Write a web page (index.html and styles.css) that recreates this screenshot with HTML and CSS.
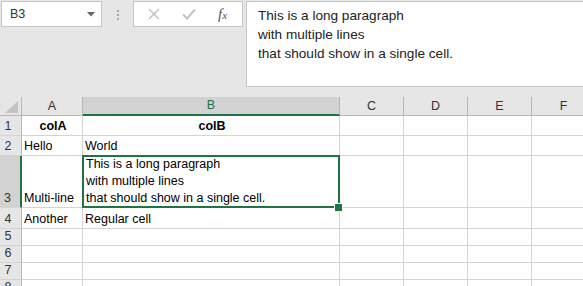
FILE: index.html
```html
<!DOCTYPE html>
<html lang="en">
<head>
  <meta charset="UTF-8" />
  <title>Sheet</title>
  <link rel="stylesheet" href="styles.css">
</head>
<body>
  <div class="toolbar">
    <div class="namebox">
      <span>B3</span>
      <svg class="caret" width="8" height="5" viewBox="0 0 8 5"><polygon points="0,0 8,0 4,4.5" fill="#666"/></svg>
    </div>
    <div class="grip"><i></i><i></i><i></i></div>
    <div class="fbuttons">
      <svg width="12" height="12" viewBox="0 0 12 12"><path d="M1 1 L11 11 M11 1 L1 11" stroke="#c2c2c2" stroke-width="1.5" fill="none"/></svg>
      <svg width="14" height="12" viewBox="0 0 14 12"><path d="M1 6.5 L5 10.5 L13 1.5" stroke="#c2c2c2" stroke-width="2" fill="none"/></svg>
      <span class="fx">f<sub>x</sub></span>
    </div>
    <div class="formula">
      <div>This is a long paragraph</div>
      <div>with multiple lines</div>
      <div>that should show in a single cell.</div>
    </div>
  </div>

  <div class="sheet">
    <div class="hd corner">
      <svg width="13" height="12" viewBox="0 0 13 12"><polygon points="13,0 13,12 0,12" fill="#c3c3c3"/></svg>
    </div>
    <div class="hd col">A</div>
    <div class="hd col active">B</div>
    <div class="hd col">C</div>
    <div class="hd col">D</div>
    <div class="hd col">E</div>
    <div class="hd col">F</div>

    <div class="hd row">1</div>
    <div class="cell bold center">colA</div>
    <div class="cell bold center">colB</div>
    <div class="cell"></div><div class="cell"></div><div class="cell"></div><div class="cell"></div>

    <div class="hd row">2</div>
    <div class="cell">Hello</div>
    <div class="cell">World</div>
    <div class="cell"></div><div class="cell"></div><div class="cell"></div><div class="cell"></div>

    <div class="hd row active">3</div>
    <div class="cell">Multi-line</div>
    <div class="cell selected">
      <div>This is a long paragraph<br>with multiple lines<br>that should show in a single cell.</div>
    </div>
    <div class="cell"></div><div class="cell"></div><div class="cell"></div><div class="cell"></div>

    <div class="hd row">4</div>
    <div class="cell">Another</div>
    <div class="cell">Regular cell</div>
    <div class="cell"></div><div class="cell"></div><div class="cell"></div><div class="cell"></div>

    <div class="hd row">5</div>
    <div class="cell"></div><div class="cell"></div><div class="cell"></div><div class="cell"></div><div class="cell"></div><div class="cell"></div>
    <div class="hd row">6</div>
    <div class="cell"></div><div class="cell"></div><div class="cell"></div><div class="cell"></div><div class="cell"></div><div class="cell"></div>
    <div class="hd row">7</div>
    <div class="cell"></div><div class="cell"></div><div class="cell"></div><div class="cell"></div><div class="cell"></div><div class="cell"></div>
    <div class="hd row">8</div>
    <div class="cell"></div><div class="cell"></div><div class="cell"></div><div class="cell"></div><div class="cell"></div><div class="cell"></div>
  </div>
</body>
</html>
```

FILE: styles.css
```css
:root {
  --green: #217346;
  --grid: #d4d4d4;
  --head: #e6e6e6;
  --head-line: #b6b6b6;
}

* {
  box-sizing: border-box;
}

body {
  margin: 0;
  width: 583px;
  height: 286px;
  overflow: hidden;
  background: #ffffff;
  font-family: 'Liberation Sans', Arial, sans-serif;
  font-size: 12.5px;
  color: #000;
}

/* formula bar */

.toolbar {
  display: flex;
  align-items: flex-start;
  height: 97px;
  padding: 1px 0 0 1px;
  background: var(--head);
}

.toolbar > * {
  flex: none;
}

.namebox {
  display: flex;
  align-items: center;
  justify-content: space-between;
  width: 101px;
  height: 26px;
  padding: 0 6px 0 8px;
  background: #fff;
  border: 1px solid #c6c6c6;
  color: #333;
}

.grip {
  display: flex;
  flex-direction: column;
  align-items: center;
  gap: 2px;
  width: 31px;
  padding-top: 9px;
}

.grip i {
  width: 2px;
  height: 2px;
  background: #a6a6a6;
}

.fbuttons {
  display: flex;
  align-items: center;
  width: 110px;
  height: 26px;
  padding-left: 14px;
  gap: 22px;
  background: #fff;
  border: 1px solid #c6c6c6;
}

.fx {
  font-family: 'Liberation Serif', serif;
  font-style: italic;
  font-size: 15px;
  color: #555;
}

.fx sub {
  font-size: 11px;
  vertical-align: 0;
}

.formula {
  width: 360px;
  height: 86px;
  margin-left: 3px;
  padding: 4px 0 0 11px;
  background: #fff;
  border: 1px solid #c6c6c6;
  font-size: 13.6px;
  line-height: 19px;
  color: #222;
}

/* grid */

.sheet {
  display: grid;
  grid-template-columns: 22px 61px 257px 64px 64px 64px 64px;
  grid-template-rows: 19px 20px 20px 52px 21px 17px 17px 17px 17px;
}

.hd {
  display: flex;
  align-items: flex-end;
  justify-content: center;
  line-height: 17px;
  background: var(--head);
  color: #333;
}

.hd.corner {
  padding: 0 3px 2px 0;
  justify-content: flex-end;
  border-right: 1px solid var(--head-line);
  border-bottom: 1px solid var(--head-line);
}

.hd.col {
  border-right: 1px solid var(--head-line);
  border-bottom: 1px solid var(--head-line);
}

.hd.row {
  padding-right: 5px;
  border-right: 1px solid var(--head-line);
  border-bottom: 1px solid var(--grid);
}

.hd.col.active {
  background: #d2d2d2;
  color: var(--green);
  border-bottom: 2px solid var(--green);
}

.hd.row.active {
  background: #d2d2d2;
  border-right: 2px solid var(--green);
}

.cell {
  display: flex;
  align-items: flex-end;
  padding-left: 2px;
  line-height: 17px;
  white-space: nowrap;
  border-right: 1px solid var(--grid);
  border-bottom: 1px solid var(--grid);
}

.cell.bold {
  font-weight: bold;
}

.cell.center {
  justify-content: center;
}

.cell.selected {
  position: relative;
  padding-left: 3px;
}

.cell.selected::after {
  content: "";
  position: absolute;
  inset: -1px;
  border: 2px solid var(--green);
}

.cell.selected::before {
  content: "";
  position: absolute;
  right: -4px;
  bottom: -5px;
  width: 7px;
  height: 7px;
  background: var(--green);
  border: 1px solid #fff;
  z-index: 1;
}
```
